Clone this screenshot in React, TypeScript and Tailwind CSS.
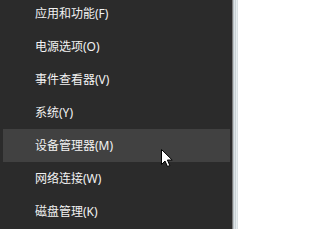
const items = [
  '应用和功能(F)',
  '电源选项(O)',
  '事件查看器(V)',
  '系统(Y)',
  '设备管理器(M)',
  '网络连接(W)',
  '磁盘管理(K)',
];

function Cursor() {
  return (
    <svg
      className="absolute left-[160px] top-[148px]"
      width="14"
      height="20"
      viewBox="0 0 14 20"
    >
      <path
        d="M1.5 1.5 L1.5 16.5 L5 13 L7.5 18.5 L9.8 17.5 L7.4 12 L12.2 12 Z"
        fill="#ffffff"
        stroke="#000000"
        strokeWidth="1"
        strokeLinejoin="miter"
      />
    </svg>
  );
}

export default function App() {
  return (
    <div className="relative flex h-[229px] w-[238px] overflow-hidden">
      <div
        className="flex w-[232px] flex-col bg-[#2b2b2b] text-[12px] text-[#f2f2f2]"
        style={{ fontFamily: '"Noto Sans", "Noto Sans CJK SC", sans-serif' }}
      >
        <div className="mt-[-3px] flex flex-col">
          {items.map((label, i) => (
            <div
              key={label}
              className={
                i === 4
                  ? 'mr-[2px] ml-[3px] flex h-[33px] items-center bg-[#414141] pl-[32px]'
                  : 'mr-[2px] ml-[3px] flex h-[33px] items-center pl-[32px]'
              }
            >
              {label}
            </div>
          ))}
        </div>
      </div>
      <div className="w-px bg-[#7b7b7b]" />
      <div className="w-px bg-[#b9c1c5]" />
      <div className="w-px bg-[#dde3e6]" />
      <div className="w-px bg-[#c9d1d5]" />
      <div className="w-px bg-[#e6ecee]" />
      <div className="w-px bg-[#d9e0e3]" />
      <Cursor />
    </div>
  );
}
